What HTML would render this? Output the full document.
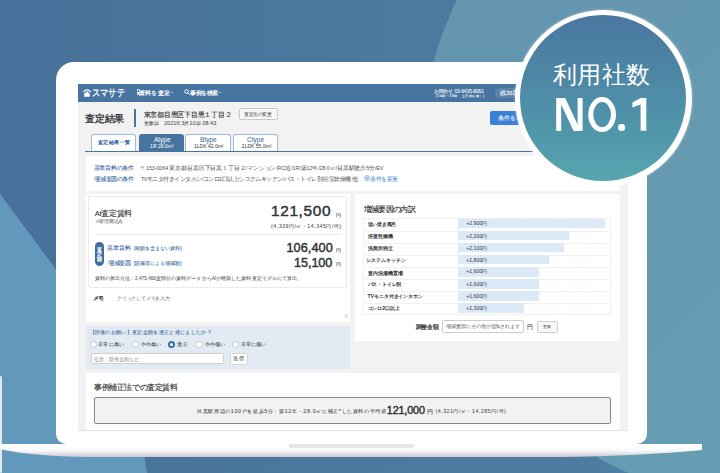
<!DOCTYPE html>
<html><head><meta charset="utf-8">
<style>
*{margin:0;padding:0;box-sizing:border-box}
html,body{width:720px;height:473px;overflow:hidden}
body{position:relative;background:#4a749b;font-family:"Liberation Sans",sans-serif;color:#333}
.a{position:absolute;white-space:nowrap;line-height:1}
.w{position:absolute;background:#fff}
.rad{position:absolute;width:7.2px;height:7.2px;border-radius:50%;background:#fff;border:0.6px solid #c4c4c4}
.tab{position:absolute;top:134px;height:17px;background:#fff;border:0.8px solid #9fbad6;border-bottom:none;border-radius:3px 3px 0 0}
</style></head><body>
<svg class="a" style="left:0;top:0" width="720" height="473" viewBox="0 0 720 473">
<defs>
<linearGradient id="dg" x1="0" y1="0" x2="1" y2="0"><stop offset="0" stop-color="#48709a"/><stop offset="1" stop-color="#4f80a2"/></linearGradient>
<linearGradient id="tg" x1="0" y1="0" x2="1" y2="1">
<stop offset="0" stop-color="#6292ac"/><stop offset="1" stop-color="#68a3b6"/>
</linearGradient>
</defs>
<rect x="0" y="0" width="720" height="473" fill="url(#dg)"/>
<circle cx="770" cy="154" r="349" fill="url(#tg)"/>
<polygon points="420,440 589,440 598,458 613,473 420,473" fill="#4e7ca0"/>
<polygon points="0,194 55,268 145,458 147,473 0,473" fill="#6298bb"/>
<rect x="0" y="376" width="2" height="97" rx="1" fill="#dfe9ee"/>
</svg>

<div class="a" style="left:56px;top:61.5px;width:591px;height:382px;background:#fff;border-radius:18px 18px 10px 10px"></div>
<svg class="a" style="left:0;top:440px" width="720" height="20" viewBox="0 440 720 20">
<defs>
<linearGradient id="bg2" x1="0" y1="0" x2="0" y2="1">
<stop offset="0" stop-color="#ffffff"/><stop offset="0.45" stop-color="#fbfbfc"/><stop offset="1" stop-color="#cfcbd2"/>
</linearGradient>
</defs>
<path d="M0,444 L702,444 L702,450 Q640,456 560,457 L90,457 Q30,456 0,449 Z" fill="url(#bg2)"/>
<path d="M289,444 L414,444 L414,446 Q414,448 412,448 L291,448 Q289,448 289,446 Z" fill="#e6e6e8"/>
</svg>

<div class="a" style="left:77.5px;top:84px;width:550px;height:346px;background:#f2f2f2"></div>
<!-- header -->
<div class="a" style="left:77.5px;top:84px;width:550px;height:17.7px;background:#4774a0"></div>
<svg class="a" style="left:82px;top:87px" width="11" height="11" viewBox="0 0 11 11">
<path d="M1.4,5 Q5,0.6 8.6,5" fill="none" stroke="#fff" stroke-width="1.2"/>
<path d="M2.2,9.8 L2.2,6.8 L5,4.2 L7.8,6.8 L7.8,9.8 Z" fill="#fff"/>
</svg>
<svg class="a" style="left:136.6px;top:89.3px" width="3" height="6" viewBox="0 0 3 6"><rect x="0.3" y="0.3" width="2.2" height="5.4" fill="none" stroke="#fff" stroke-width="0.6"/><rect x="0.8" y="3" width="1.2" height="2" fill="#fff"/></svg>
<div class="a" style="left:171px;top:91.6px;width:0;height:0;border-left:1.2px solid transparent;border-right:1.2px solid transparent;border-top:1.8px solid #fff"></div>
<svg class="a" style="left:184px;top:89.2px" width="6" height="6" viewBox="0 0 6 6"><circle cx="2.5" cy="2.5" r="1.8" fill="none" stroke="#fff" stroke-width="0.9"/><path d="M3.8,3.8 L5.6,5.6" stroke="#fff" stroke-width="1"/></svg>
<div class="a" style="left:219.4px;top:91.6px;width:0;height:0;border-left:1.2px solid transparent;border-right:1.2px solid transparent;border-top:1.8px solid #fff"></div>
<div class="a" style="left:494.7px;top:87.9px;width:40px;height:10px;border-radius:5px;background:#5b83ab"></div>

<!-- title -->
<div class="a" style="left:133.5px;top:109px;width:2px;height:17.7px;background:#4774a0"></div>
<div class="a" style="left:238.5px;top:108.3px;width:39.5px;height:12px;background:#f7f7f7;border:0.6px solid #c9c9c9;border-radius:2px"></div>
<div class="a" style="left:490px;top:110.5px;width:60px;height:14.8px;background:#3b7fd6;border-radius:2px"></div>

<!-- tabs -->
<div class="tab" style="left:91.3px;width:45px"></div>
<div class="a" style="left:138.8px;top:134px;width:45px;height:17px;background:#4774a0;border-radius:3px 3px 0 0"></div>
<div class="tab" style="left:185.3px;width:45.6px"></div>
<div class="tab" style="left:232.5px;width:45.5px"></div>
<div class="a" style="left:85px;top:150.6px;width:534.5px;height:1.6px;background:#4774a0"></div>

<!-- conditions -->
<div class="w" style="left:85.5px;top:155.5px;width:534px;height:35px"></div>
<svg class="a" style="left:364.2px;top:175px" width="6" height="6" viewBox="0 0 6 6"><circle cx="3" cy="3" r="2.4" fill="none" stroke="#3b7fd6" stroke-width="0.6"/><path d="M3,1.6 L3,4.4 M1.6,3 L4.4,3" stroke="#3b7fd6" stroke-width="0.6"/></svg>

<!-- left panel -->
<div class="w" style="left:85.5px;top:193.9px;width:264.5px;height:128px"></div>
<div class="a" style="left:88px;top:196.4px;width:259px;height:91.3px;border:0.7px solid #ebebeb;border-radius:2px"></div>
<div class="a" style="left:94.6px;top:234px;width:247.5px;height:0.6px;background:#e8e8e8"></div>
<div class="a" style="left:94.6px;top:242.4px;width:9.3px;height:23.6px;border-radius:4.65px;background:#3f6fa0"></div>
<svg class="a" style="left:343px;top:312.5px" width="5" height="5" viewBox="0 0 5 5"><path d="M4.5,1 L1,4.5 M4.5,2.8 L2.8,4.5" stroke="#999" stroke-width="0.6"/></svg>

<!-- feedback -->
<div class="a" style="left:85.8px;top:326.2px;width:264.2px;height:42.8px;background:#e2ebf4"></div>
<div class="rad" style="left:90px;top:340.9px"></div>
<div class="rad" style="left:132px;top:340.9px"></div>
<div class="rad" style="left:168.1px;top:340.9px;border:2.2px solid #3f6fa0"></div>
<div class="rad" style="left:195.4px;top:340.9px"></div>
<div class="rad" style="left:232px;top:340.9px"></div>
<div class="a" style="left:90.5px;top:352.7px;width:133.9px;height:11.7px;background:#fff;border:0.6px solid #cfcfcf;border-radius:1.5px"></div>
<div class="a" style="left:229.7px;top:352.5px;width:18.4px;height:12px;background:#fff;border:0.6px solid #d5d5d5;border-radius:1.5px"></div>

<!-- right panel -->
<div class="w" style="left:354.5px;top:193.9px;width:265px;height:147.5px"></div>
<div class="a" style="left:363px;top:218.4px;width:247.5px;height:96.8px;border:0.6px solid #f0f0f0"></div>
<svg class="a" style="left:457.8px;top:218.4px" width="152.7" height="96.8" viewBox="0 0 152.7 96.8"><line x1="10.8" y1="0" x2="10.8" y2="96.8" stroke="#e6e6e6" stroke-width="0.5" stroke-dasharray="1,1.5"/><line x1="20.9" y1="0" x2="20.9" y2="96.8" stroke="#e6e6e6" stroke-width="0.5" stroke-dasharray="1,1.5"/><line x1="31.0" y1="0" x2="31.0" y2="96.8" stroke="#e6e6e6" stroke-width="0.5" stroke-dasharray="1,1.5"/><line x1="41.1" y1="0" x2="41.1" y2="96.8" stroke="#e6e6e6" stroke-width="0.5" stroke-dasharray="1,1.5"/><line x1="51.2" y1="0" x2="51.2" y2="96.8" stroke="#e6e6e6" stroke-width="0.5" stroke-dasharray="1,1.5"/><line x1="61.3" y1="0" x2="61.3" y2="96.8" stroke="#e6e6e6" stroke-width="0.5" stroke-dasharray="1,1.5"/><line x1="71.4" y1="0" x2="71.4" y2="96.8" stroke="#e6e6e6" stroke-width="0.5" stroke-dasharray="1,1.5"/><line x1="81.5" y1="0" x2="81.5" y2="96.8" stroke="#e6e6e6" stroke-width="0.5" stroke-dasharray="1,1.5"/><line x1="91.6" y1="0" x2="91.6" y2="96.8" stroke="#e6e6e6" stroke-width="0.5" stroke-dasharray="1,1.5"/><line x1="101.7" y1="0" x2="101.7" y2="96.8" stroke="#e6e6e6" stroke-width="0.5" stroke-dasharray="1,1.5"/><line x1="111.8" y1="0" x2="111.8" y2="96.8" stroke="#e6e6e6" stroke-width="0.5" stroke-dasharray="1,1.5"/><line x1="121.9" y1="0" x2="121.9" y2="96.8" stroke="#e6e6e6" stroke-width="0.5" stroke-dasharray="1,1.5"/><line x1="132.0" y1="0" x2="132.0" y2="96.8" stroke="#e6e6e6" stroke-width="0.5" stroke-dasharray="1,1.5"/><line x1="142.1" y1="0" x2="142.1" y2="96.8" stroke="#e6e6e6" stroke-width="0.5" stroke-dasharray="1,1.5"/><line x1="152.2" y1="0" x2="152.2" y2="96.8" stroke="#e6e6e6" stroke-width="0.5" stroke-dasharray="1,1.5"/></svg>
<div class="a" style="left:457.5px;top:218.4px;width:0.6px;height:96.8px;background:#eeeeee"></div>
<div class="a" style="left:457.8px;top:218.60px;width:147.0px;height:9.50px;background:#dce9f7"></div>
<div class="a" style="left:363px;top:230.50px;width:247.5px;height:0.6px;background:#f1f1f1"></div>
<div class="a" style="left:457.8px;top:230.70px;width:111.5px;height:9.50px;background:#dce9f7"></div>
<div class="a" style="left:363px;top:242.60px;width:247.5px;height:0.6px;background:#f1f1f1"></div>
<div class="a" style="left:457.8px;top:242.80px;width:106.5px;height:9.50px;background:#dce9f7"></div>
<div class="a" style="left:363px;top:254.70px;width:247.5px;height:0.6px;background:#f1f1f1"></div>
<div class="a" style="left:457.8px;top:254.90px;width:91.3px;height:9.50px;background:#dce9f7"></div>
<div class="a" style="left:363px;top:266.80px;width:247.5px;height:0.6px;background:#f1f1f1"></div>
<div class="a" style="left:457.8px;top:267.00px;width:81.1px;height:9.50px;background:#dce9f7"></div>
<div class="a" style="left:363px;top:278.90px;width:247.5px;height:0.6px;background:#f1f1f1"></div>
<div class="a" style="left:457.8px;top:279.10px;width:81.1px;height:9.50px;background:#dce9f7"></div>
<div class="a" style="left:363px;top:291.00px;width:247.5px;height:0.6px;background:#f1f1f1"></div>
<div class="a" style="left:457.8px;top:291.20px;width:81.1px;height:9.50px;background:#dce9f7"></div>
<div class="a" style="left:363px;top:303.10px;width:247.5px;height:0.6px;background:#f1f1f1"></div>
<div class="a" style="left:457.8px;top:303.30px;width:65.9px;height:9.50px;background:#dce9f7"></div>
<div class="a" style="left:442.2px;top:320.4px;width:82.2px;height:12.3px;background:#fff;border:0.6px solid #ccc;border-radius:1.5px"></div>
<div class="a" style="left:536.7px;top:321px;width:21.1px;height:12px;background:#f7f7f7;border:0.6px solid #ccc;border-radius:1.5px"></div>

<!-- bottom panel -->
<div class="a" style="left:77.5px;top:429.6px;width:550px;height:0.6px;background:#e4e4e4"></div>
<div class="w" style="left:85.5px;top:372.8px;width:534px;height:57.2px"></div>
<div class="a" style="left:94.4px;top:396.6px;width:516.3px;height:27px;background:#f2f2f2;border:0.9px solid #888;border-radius:2px"></div>

<!-- badge -->
<div class="a" style="left:514.5px;top:9.5px;width:177px;height:177px;border-radius:50%;background:#fff;z-index:5;box-shadow:0 0 3px rgba(255,255,255,0.5);"></div>
<div class="a" style="left:520px;top:15px;width:166px;height:166px;border-radius:50%;z-index:5;background:linear-gradient(180deg,#4a76a0 0%,#5096aa 70%,#58a5b0 100%);"></div>

<svg class="a" style="left:550px;top:90px;z-index:6" width="110" height="50" viewBox="550 90 110 50"><rect x="618.2" y="124" width="6.8" height="6.8" rx="2.6" fill="#fff"/><path d="M556.2,98 L565.2,98 L577.6,124.6 L577.6,98 L582.6,98 L582.6,131.1 L573.6,131.1 L561.2,104.6 L561.2,131.1 L556.2,131.1 Z" fill="#fff"/><ellipse cx="602.1" cy="114.55" rx="11.4" ry="15.0" fill="none" stroke="#fff" stroke-width="5.0"/><path d="M632.4,102.6 L640.6,97.9 L646.3,97.9 L646.3,130.8 L640.6,130.8 L640.6,104.4 L632.4,107.4 Z" fill="#fff"/></svg>
<div class="a tx" id="t_logo" style="left:92.30px;top:88.00px;font-size:10.2px;color:#fff;letter-spacing:0.000px;-webkit-text-stroke:0.3px #fff;transform:scaleX(0.82);transform-origin:0 0">スマサテ</div>
<div class="a tx" id="t_nav1" style="left:139.30px;top:89.70px;font-size:6px;color:#fff;letter-spacing:0.100px;font-weight:bold">資料を査定</div>
<div class="a tx" id="t_nav2" style="left:190.40px;top:89.70px;font-size:6px;color:#fff;letter-spacing:-0.600px;font-weight:bold">事例を検索</div>
<div class="a tx" id="t_tel" style="left:433.70px;top:88.60px;font-size:5.0px;color:#fff;letter-spacing:-0.138px;;-webkit-text-stroke:0.06px #fff">お問合せ 03-6435-8061</div>
<div class="a tx" id="t_tel2" style="left:435.76px;top:94.82px;font-size:3.4px;color:#fff;letter-spacing:0.576px;;-webkit-text-stroke:0.06px #fff">(10時〜18時　土日祝を除く)</div>
<div class="a tx" id="t_rem" style="left:500.00px;top:89.64px;font-size:6px;color:#fff;letter-spacing:0.000px;;-webkit-text-stroke:0.06px #fff">残36回</div>
<div class="a tx" id="t_title" style="left:85.30px;top:113.70px;font-size:9.8px;color:#333;letter-spacing:-0.267px;-webkit-text-stroke:0.35px #333">査定結果</div>
<div class="a tx" id="t_addr" style="left:143.50px;top:111.60px;font-size:6.8px;color:#333;letter-spacing:-0.233px;-webkit-text-stroke:0.12px #333">東京都目黒区下目黒１丁目２</div>
<div class="a tx" id="t_upd" style="left:143.50px;top:120.60px;font-size:5.3px;color:#4a4a4a;letter-spacing:0.126px;;-webkit-text-stroke:0.06px #4a4a4a">更新日　2021年3月10日 08:43</div>
<div class="a tx" id="t_rename" style="left:244.38px;top:113.32px;font-size:4.7px;color:#333;letter-spacing:-0.560px;-webkit-text-stroke:0">査定名の変更</div>
<div class="a tx" id="t_copy" style="left:498.00px;top:115.80px;font-size:5.5px;color:#fff;letter-spacing:0.000px;;-webkit-text-stroke:0.06px #fff">条件をコピー</div>
<div class="a tx" id="t_tab1" style="left:98.10px;top:140.10px;font-size:5.4px;color:#2f639b;letter-spacing:0.400px;-webkit-text-stroke:0.2px #2f639b">査定結果一覧</div>
<div class="a tx" id="t_tabA" style="left:153.88px;top:137.36px;font-size:6.5px;color:#fff;letter-spacing:0.000px;-webkit-text-stroke:0">Atype</div>
<div class="a tx" id="t_tabA2" style="left:150.12px;top:144.14px;font-size:5.0px;color:#fff;letter-spacing:0.000px;-webkit-text-stroke:0">1R 28.0m²</div>
<div class="a tx" id="t_tabB" style="left:200.12px;top:137.36px;font-size:6.5px;color:#2f639b;letter-spacing:0.000px;-webkit-text-stroke:0">Btype</div>
<div class="a tx" id="t_tabB2" style="left:194.06px;top:144.14px;font-size:5.0px;color:#333;letter-spacing:0.000px;-webkit-text-stroke:0">1LDK 42.0m²</div>
<div class="a tx" id="t_tabC" style="left:247.12px;top:137.36px;font-size:6.5px;color:#2f639b;letter-spacing:0.000px;-webkit-text-stroke:0">Ctype</div>
<div class="a tx" id="t_tabC2" style="left:241.86px;top:144.14px;font-size:5.0px;color:#333;letter-spacing:0.000px;-webkit-text-stroke:0">2LDK 55.0m²</div>
<div class="a tx" id="t_c1l" style="left:93.60px;top:165.80px;font-size:5.5px;color:#2f639b;letter-spacing:-0.267px;;-webkit-text-stroke:0.06px #2f639b">基準賃料の条件</div>
<div class="a tx" id="t_c1v" style="left:140.20px;top:165.80px;font-size:5.5px;color:#555;letter-spacing:-0.147px;-webkit-text-stroke:0">〒153-0064 東京都目黒区下目黒１丁目２/マンション/RC造/1R/築12年/28.0㎡/目黒駅徒歩5分/EV</div>
<div class="a tx" id="t_c2l" style="left:94.40px;top:176.70px;font-size:5.5px;color:#2f639b;letter-spacing:-0.400px;;-webkit-text-stroke:0.06px #2f639b">増減要因の条件</div>
<div class="a tx" id="t_c2v" style="left:141.00px;top:176.70px;font-size:5.5px;color:#555;letter-spacing:-0.527px;-webkit-text-stroke:0">TVモニタ付きインタホン/コンロ2口以上/システムキッチン/バス・トイレ別/浴室乾燥機 他</div>
<div class="a tx" id="t_c2btn" style="left:370.20px;top:176.70px;font-size:5.5px;color:#3a7fd5;letter-spacing:-0.520px;-webkit-text-stroke:0">条件を変更</div>
<div class="a tx" id="t_ai" style="left:94.76px;top:209.80px;font-size:7.5px;color:#333;letter-spacing:-0.312px;-webkit-text-stroke:0.1px #333">AI査定賃料</div>
<div class="a tx" id="t_tax" style="left:94.60px;top:219.75px;font-size:4.6px;color:#777;letter-spacing:-0.240px;;-webkit-text-stroke:0.06px #777">※管理費込み</div>
<div class="a tx" id="t_p1" style="left:271.00px;top:203.45px;font-size:15.4px;color:#333;letter-spacing:0.640px;-webkit-text-stroke:0.45px #333">121,500</div>
<div class="a tx" id="t_p1y" style="left:336.10px;top:213.00px;font-size:5.2px;color:#333;letter-spacing:0.000px;;-webkit-text-stroke:0.06px #333">円</div>
<div class="a tx" id="t_p1s" style="left:271.00px;top:223.95px;font-size:5.3px;color:#4a4a4a;letter-spacing:0.484px;;-webkit-text-stroke:0.06px #4a4a4a">(4,339円/㎡・14,345円/坪)</div>
<div class="a tx" id="t_pill" style="left:97.00px;top:246.60px;font-size:4.8px;color:#fff;letter-spacing:-1.200px;line-height:5px;-webkit-text-stroke:0.2px #fff">査<br>定<br>額</div>
<div class="a tx" id="t_k1" style="left:107.20px;top:245.65px;font-size:5.9px;color:#2f639b;letter-spacing:0.000px;;-webkit-text-stroke:0.06px #2f639b">基準賃料</div>
<div class="a tx" id="t_k1s" style="left:133.75px;top:246.56px;font-size:4.8px;color:#2f639b;letter-spacing:-0.000px;;-webkit-text-stroke:0.06px #2f639b">(税額を含まない賃料)</div>
<div class="a tx" id="t_k2" style="left:108.00px;top:260.70px;font-size:5.9px;color:#2f639b;letter-spacing:-0.267px;;-webkit-text-stroke:0.06px #2f639b">増減要因</div>
<div class="a tx" id="t_k2s" style="left:133.75px;top:261.80px;font-size:4.8px;color:#2f639b;letter-spacing:-0.000px;;-webkit-text-stroke:0.06px #2f639b">(設備等による増減額)</div>
<div class="a tx" id="t_p2" style="left:286.50px;top:241.55px;font-size:12.7px;color:#333;letter-spacing:0.067px;-webkit-text-stroke:0.45px #333">106,400</div>
<div class="a tx" id="t_p2y" style="left:336.10px;top:247.50px;font-size:5.0px;color:#333;letter-spacing:0.000px;;-webkit-text-stroke:0.06px #333">円</div>
<div class="a tx" id="t_p3" style="left:294.00px;top:256.70px;font-size:12.7px;color:#333;letter-spacing:-0.080px;-webkit-text-stroke:0.45px #333">15,100</div>
<div class="a tx" id="t_p3y" style="left:336.10px;top:262.05px;font-size:5.0px;color:#333;letter-spacing:0.000px;;-webkit-text-stroke:0.06px #333">円</div>
<div class="a tx" id="t_meth" style="left:94.50px;top:277.00px;font-size:4.6px;color:#555;letter-spacing:0.061px;;-webkit-text-stroke:0.06px #555">賃料の算出方法：2,475,466室部分の賃料データからAIが構築した賃料査定モデルにて算出。</div>
<div class="a tx" id="t_memo" style="left:92.54px;top:294.66px;font-size:6px;color:#333;letter-spacing:-0.640px;-webkit-text-stroke:0.25px #333">メモ</div>
<div class="a tx" id="t_memoph" style="left:117.05px;top:295.80px;font-size:5px;color:#777;letter-spacing:-0.220px;;-webkit-text-stroke:0.06px #777">クリックしてメモを入力</div>
<div class="a tx" id="t_fbt" style="left:89.50px;top:330.10px;font-size:5.4px;color:#2f639b;letter-spacing:0.327px;;-webkit-text-stroke:0.06px #2f639b">【評価のお願い】査定金額を適正と感じましたか？</div>
<div class="a tx" id="t_r1" style="left:98.30px;top:343.00px;font-size:4.9px;color:#444;letter-spacing:0.200px;;-webkit-text-stroke:0.06px #444">非常に高い</div>
<div class="a tx" id="t_r2" style="left:141.00px;top:343.00px;font-size:4.9px;color:#444;letter-spacing:0.133px;;-webkit-text-stroke:0.06px #444">やや高い</div>
<div class="a tx" id="t_r3" style="left:177.20px;top:343.00px;font-size:4.9px;color:#444;letter-spacing:0.800px;;-webkit-text-stroke:0.06px #444">適正</div>
<div class="a tx" id="t_r4" style="left:205.05px;top:343.00px;font-size:4.9px;color:#444;letter-spacing:0.067px;;-webkit-text-stroke:0.06px #444">やや低い</div>
<div class="a tx" id="t_r5" style="left:240.70px;top:343.00px;font-size:4.9px;color:#444;letter-spacing:0.100px;;-webkit-text-stroke:0.06px #444">非常に低い</div>
<div class="a tx" id="t_fbin" style="left:94.30px;top:357.50px;font-size:4.8px;color:#999;letter-spacing:0.025px;;-webkit-text-stroke:0.06px #999">任意：該当金額など</div>
<div class="a tx" id="t_send" style="left:233.10px;top:356.00px;font-size:5.0px;color:#333;letter-spacing:0.600px;;-webkit-text-stroke:0.06px #333">送信</div>
<div class="a tx" id="t_rt" style="left:363.80px;top:205.90px;font-size:7.5px;color:#333;letter-spacing:-0.667px;-webkit-text-stroke:0.15px #333">増減要因の内訳</div>
<div class="a tx" id="t_rl0" style="left:367.52px;top:221.74px;font-size:5.2px;color:#333;letter-spacing:-0.208px;font-weight:bold">追い焚き風呂</div>
<div class="a tx" id="t_rv0" style="left:466.14px;top:221.36px;font-size:5.2px;color:#4a4a4a;letter-spacing:0.040px;;-webkit-text-stroke:0.06px #4a4a4a">+2,900円</div>
<div class="a tx" id="t_rl1" style="left:367.52px;top:233.94px;font-size:5.2px;color:#333;letter-spacing:0.000px;font-weight:bold">浴室乾燥機</div>
<div class="a tx" id="t_rv1" style="left:466.14px;top:233.56px;font-size:5.2px;color:#4a4a4a;letter-spacing:0.040px;;-webkit-text-stroke:0.06px #4a4a4a">+2,200円</div>
<div class="a tx" id="t_rl2" style="left:367.52px;top:246.14px;font-size:5.2px;color:#333;letter-spacing:0.000px;font-weight:bold">洗面所独立</div>
<div class="a tx" id="t_rv2" style="left:466.14px;top:245.76px;font-size:5.2px;color:#4a4a4a;letter-spacing:0.040px;;-webkit-text-stroke:0.06px #4a4a4a">+2,100円</div>
<div class="a tx" id="t_rl3" style="left:365.92px;top:258.34px;font-size:5.2px;color:#333;letter-spacing:0.000px;font-weight:bold">システムキッチン</div>
<div class="a tx" id="t_rv3" style="left:466.14px;top:257.96px;font-size:5.2px;color:#4a4a4a;letter-spacing:0.040px;;-webkit-text-stroke:0.06px #4a4a4a">+1,800円</div>
<div class="a tx" id="t_rl4" style="left:367.52px;top:270.54px;font-size:5.2px;color:#333;letter-spacing:0.000px;font-weight:bold">室内洗濯機置場</div>
<div class="a tx" id="t_rv4" style="left:466.14px;top:269.36px;font-size:5.2px;color:#4a4a4a;letter-spacing:0.040px;;-webkit-text-stroke:0.06px #4a4a4a">+1,600円</div>
<div class="a tx" id="t_rl5" style="left:367.52px;top:281.94px;font-size:5.2px;color:#333;letter-spacing:-0.200px;font-weight:bold">バス・トイレ別</div>
<div class="a tx" id="t_rv5" style="left:466.14px;top:281.56px;font-size:5.2px;color:#4a4a4a;letter-spacing:0.040px;;-webkit-text-stroke:0.06px #4a4a4a">+1,600円</div>
<div class="a tx" id="t_rl6" style="left:367.52px;top:294.14px;font-size:5.2px;color:#333;letter-spacing:-0.102px;font-weight:bold">TVモニタ付きインタホン</div>
<div class="a tx" id="t_rv6" style="left:466.14px;top:293.76px;font-size:5.2px;color:#4a4a4a;letter-spacing:0.040px;;-webkit-text-stroke:0.06px #4a4a4a">+1,600円</div>
<div class="a tx" id="t_rl7" style="left:367.52px;top:306.34px;font-size:5.2px;color:#333;letter-spacing:-0.067px;font-weight:bold">コンロ2口以上</div>
<div class="a tx" id="t_rv7" style="left:466.14px;top:305.96px;font-size:5.2px;color:#4a4a4a;letter-spacing:0.040px;;-webkit-text-stroke:0.06px #4a4a4a">+1,300円</div>
<div class="a tx" id="t_adj" style="left:415.60px;top:324.60px;font-size:5.5px;color:#333;letter-spacing:-0.133px;font-weight:bold">調整金額</div>
<div class="a tx" id="t_adjph" style="left:446.30px;top:325.20px;font-size:4.6px;color:#777;letter-spacing:-0.086px;;-webkit-text-stroke:0.06px #777">増減要因にその他が追加されます</div>
<div class="a tx" id="t_adjy" style="left:527.48px;top:325.08px;font-size:5.5px;color:#333;letter-spacing:0.000px;;-webkit-text-stroke:0.06px #333">円</div>
<div class="a tx" id="t_upd2" style="left:543.14px;top:325.14px;font-size:4.4px;color:#444;letter-spacing:0.240px;-webkit-text-stroke:0">更新</div>
<div class="a tx" id="t_bt" style="left:94.40px;top:384.00px;font-size:7.5px;color:#333;letter-spacing:-0.480px;-webkit-text-stroke:0.15px #333">事例補正法での査定賃料</div>
<div class="a tx" id="t_bres" style="left:197.00px;top:409.00px;font-size:5.4px;color:#444;letter-spacing:0.632px;;-webkit-text-stroke:0.06px #444">目黒駅周辺の100戸を徒歩5分・築12年・28.0㎡に補正*した賃料の平均値：</div>
<div class="a tx" id="t_bnum" style="left:386.82px;top:404.52px;font-size:10.8px;color:#333;letter-spacing:-0.160px;-webkit-text-stroke:0.45px #333">121,000</div>
<div class="a tx" id="t_byen" style="left:426.50px;top:409.50px;font-size:5.5px;color:#333;letter-spacing:0.000px;;-webkit-text-stroke:0.06px #333">円</div>
<div class="a tx" id="t_bsub" style="left:435.52px;top:409.24px;font-size:5.2px;color:#4a4a4a;letter-spacing:0.531px;;-webkit-text-stroke:0.06px #4a4a4a">(4,321円/㎡・14,285円/坪)</div>
<div class="a tx" id="t_b1" style="left:553.30px;top:62.50px;font-size:24px;color:#fff;letter-spacing:0.133px;z-index:6">利用社数</div>
</body></html>
